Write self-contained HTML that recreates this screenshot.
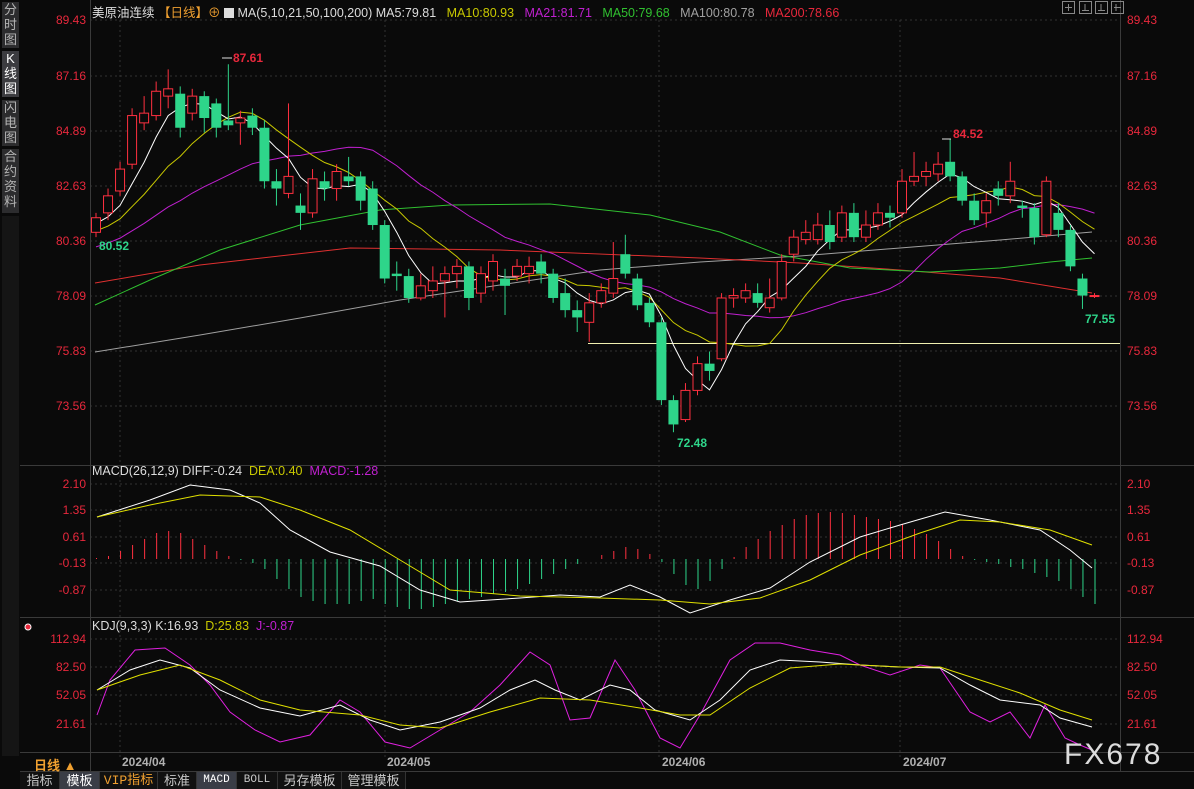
<!DOCTYPE html>
<html><head><meta charset="utf-8"><style>
body{margin:0;width:1194px;height:789px;background:#0a0a0a;overflow:hidden;font-family:"Liberation Sans","Noto Sans CJK SC",sans-serif;position:relative}
.sb{position:absolute;left:2px;width:17px;background:#2c2c2e;color:#b4b4b4;font-size:13px;line-height:15px;text-align:center}
.lab{position:absolute;font-size:12px;color:#e8283c}
.l{right:1108px;text-align:right}
.r{left:1127px}
.tab{position:absolute;top:772px;height:17px;font-size:13px;line-height:17px;color:#c8c8c8;text-align:center;background:#111;border-right:1px solid #333}
</style></head><body>
<div class="sb" style="top:2px;height:46px">分<br>时<br>图</div>
<div class="sb" style="top:51px;height:46px;background:#3c3c40;color:#fff">K<br>线<br>图</div>
<div class="sb" style="top:100px;height:46px">闪<br>电<br>图</div>
<div class="sb" style="top:149px;height:64px">合<br>约<br>资<br>料</div>
<div class="sb" style="top:216px;height:540px;background:#151515"></div>

<svg style="position:absolute;left:0;top:0" width="1194" height="789" id="s">
<g stroke="#333" stroke-dasharray="2,3" stroke-width="1">
<line x1="90" y1="20" x2="1120" y2="20"/><line x1="90" y1="76" x2="1120" y2="76"/><line x1="90" y1="131" x2="1120" y2="131"/><line x1="90" y1="186" x2="1120" y2="186"/><line x1="90" y1="241" x2="1120" y2="241"/><line x1="90" y1="296" x2="1120" y2="296"/><line x1="90" y1="351" x2="1120" y2="351"/><line x1="90" y1="406" x2="1120" y2="406"/>
<line x1="90" y1="484" x2="1120" y2="484"/><line x1="90" y1="510" x2="1120" y2="510"/><line x1="90" y1="537" x2="1120" y2="537"/><line x1="90" y1="563" x2="1120" y2="563"/><line x1="90" y1="590" x2="1120" y2="590"/>
<line x1="90" y1="639" x2="1120" y2="639"/><line x1="90" y1="667" x2="1120" y2="667"/><line x1="90" y1="695" x2="1120" y2="695"/><line x1="90" y1="724" x2="1120" y2="724"/>
<line x1="120" y1="20" x2="120" y2="760"/><line x1="385" y1="20" x2="385" y2="760"/><line x1="659" y1="20" x2="659" y2="760"/><line x1="900" y1="20" x2="900" y2="760"/>
</g>
<g stroke="#3a3a3a" stroke-width="1">
<line x1="90.5" y1="0" x2="90.5" y2="771"/><line x1="1120.5" y1="0" x2="1120.5" y2="771"/>
<line x1="20" y1="465.5" x2="1194" y2="465.5"/><line x1="20" y1="617.5" x2="1194" y2="617.5"/><line x1="20" y1="752.5" x2="1194" y2="752.5"/><line x1="20" y1="771.5" x2="1194" y2="771.5"/>
</g>
<line x1="588" y1="343.5" x2="1120" y2="343.5" stroke="#f0f0b0" stroke-width="1"/>
<g id="g" fill="none"></g>
<g fill="#bbb" stroke="#888" stroke-width="1">
<rect x="1062.5" y="1.5" width="12" height="12" fill="none"/><rect x="1079.5" y="1.5" width="12" height="12" fill="none"/><rect x="1095.5" y="1.5" width="12" height="12" fill="none"/><rect x="1111.5" y="1.5" width="12" height="12" fill="none"/>
<path d="M1068.5 4v7M1065 7.5h7M1085 4v7M1082 10.5h7M1101 4v7M1098 10.5h7M1114 7.5h7M1116 4v7" fill="none"/>
</g>
<g font-size="12" font-weight="bold"><text x="233" y="62" fill="#e8283c">87.61</text><text x="953" y="138" fill="#e8283c">84.52</text><text x="99" y="250" fill="#2ed58a">80.52</text><text x="677" y="447" fill="#2ed58a">72.48</text><text x="1085" y="323" fill="#2ed58a">77.55</text></g>
<g stroke="#ddd"><line x1="222" y1="58" x2="232" y2="58"/><line x1="942" y1="139" x2="951" y2="139"/></g>
<circle cx="28" cy="627" r="3" fill="#e8283c" stroke="#fff" stroke-width="1"/>
<text x="1064" y="764" font-size="30" fill="#dcdcdc" letter-spacing="2">FX678</text>
</svg>

<div style="position:absolute;left:92px;top:2px;font-size:12.5px;white-space:nowrap;color:#ddd">美原油连续 <span style="color:#f0a030">【日线】</span><span style="color:#f0a030">⊕</span> <span style="display:inline-block;width:10px;height:10px;background:#ddd;vertical-align:-1px"></span> MA(5,10,21,50,100,200) MA5:79.81 &nbsp;&nbsp;<span style="color:#c8c800">MA10:80.93</span> &nbsp;&nbsp;<span style="color:#c020d0">MA21:81.71</span> &nbsp;&nbsp;<span style="color:#30c030">MA50:79.68</span> &nbsp;&nbsp;<span style="color:#a0a0a0">MA100:80.78</span> &nbsp;&nbsp;<span style="color:#e8283c">MA200:78.66</span></div>
<div style="position:absolute;left:92px;top:464px;font-size:12.5px;white-space:nowrap;color:#ddd">MACD(26,12,9) DIFF:-0.24 &nbsp;<span style="color:#c8c800">DEA:0.40</span> &nbsp;<span style="color:#c020d0">MACD:-1.28</span></div>
<div style="position:absolute;left:92px;top:619px;font-size:12.5px;white-space:nowrap;color:#ddd">KDJ(9,3,3) K:16.93 &nbsp;<span style="color:#c8c800">D:25.83</span> &nbsp;<span style="color:#c020d0">J:-0.87</span></div>

<div class="lab l" style="top:13px">89.43</div><div class="lab l" style="top:69px">87.16</div><div class="lab l" style="top:124px">84.89</div><div class="lab l" style="top:179px">82.63</div><div class="lab l" style="top:234px">80.36</div><div class="lab l" style="top:289px">78.09</div><div class="lab l" style="top:344px">75.83</div><div class="lab l" style="top:399px">73.56</div>
<div class="lab r" style="top:13px">89.43</div><div class="lab r" style="top:69px">87.16</div><div class="lab r" style="top:124px">84.89</div><div class="lab r" style="top:179px">82.63</div><div class="lab r" style="top:234px">80.36</div><div class="lab r" style="top:289px">78.09</div><div class="lab r" style="top:344px">75.83</div><div class="lab r" style="top:399px">73.56</div>
<div class="lab l" style="top:477px">2.10</div><div class="lab l" style="top:503px">1.35</div><div class="lab l" style="top:530px">0.61</div><div class="lab l" style="top:556px">-0.13</div><div class="lab l" style="top:583px">-0.87</div>
<div class="lab r" style="top:477px">2.10</div><div class="lab r" style="top:503px">1.35</div><div class="lab r" style="top:530px">0.61</div><div class="lab r" style="top:556px">-0.13</div><div class="lab r" style="top:583px">-0.87</div>
<div class="lab l" style="top:632px">112.94</div><div class="lab l" style="top:660px">82.50</div><div class="lab l" style="top:688px">52.05</div><div class="lab l" style="top:717px">21.61</div>
<div class="lab r" style="top:632px">112.94</div><div class="lab r" style="top:660px">82.50</div><div class="lab r" style="top:688px">52.05</div><div class="lab r" style="top:717px">21.61</div>

<div style="position:absolute;left:34px;top:755px;font-size:13px;font-weight:bold;color:#f0a030">日线 ▲</div>
<div style="position:absolute;top:755px;left:122px;font-size:12px;font-weight:bold;color:#b0b0b0">2024/04</div>
<div style="position:absolute;top:755px;left:387px;font-size:12px;font-weight:bold;color:#b0b0b0">2024/05</div>
<div style="position:absolute;top:755px;left:662px;font-size:12px;font-weight:bold;color:#b0b0b0">2024/06</div>
<div style="position:absolute;top:755px;left:903px;font-size:12px;font-weight:bold;color:#b0b0b0">2024/07</div>

<div class="tab" style="left:20px;width:39px">指标</div>
<div class="tab" style="left:60px;width:39px;background:#3a3d46;color:#fff">模板</div>
<div class="tab" style="left:100px;width:57px;color:#f0a030;font-family:'Liberation Mono','Noto Sans CJK SC',monospace">VIP指标</div>
<div class="tab" style="left:158px;width:38px">标准</div>
<div class="tab" style="left:197px;width:39px;background:#3a3d46;color:#fff;font-size:11px;font-family:'Liberation Mono',monospace">MACD</div>
<div class="tab" style="left:237px;width:40px;font-size:11px;font-family:'Liberation Mono',monospace">BOLL</div>
<div class="tab" style="left:278px;width:63px">另存模板</div>
<div class="tab" style="left:342px;width:63px">管理模板</div>

<script>
var g=document.getElementById('g'),NS='http://www.w3.org/2000/svg';
function el(t,a){var e=document.createElementNS(NS,t);for(var k in a)e.setAttribute(k,a[k]);g.appendChild(e);return e}
function Y(p){return 20+(89.43-p)*24.32}
var C=[[80.7,81.3,81.5,80.5],[81.5,82.2,82.5,81.2],[82.4,83.3,83.6,82.2],[83.5,85.5,85.8,83.3],[85.2,85.6,86.3,84.9],[85.5,86.5,86.9,85.3],[86.3,86.6,87.4,85.8],[86.4,85.0,86.7,84.6],[85.6,86.3,86.6,85.3],[86.3,85.4,86.5,84.8],[86.0,85.0,86.2,84.6],[85.3,85.1,87.61,84.9],[85.2,85.4,85.7,84.3],[85.5,85.0,85.8,84.7],[85.0,82.8,85.3,82.5],[82.8,82.5,83.3,81.8],[82.3,83.0,86.0,82.1],[81.8,81.5,82.3,80.8],[81.5,82.9,83.3,81.3],[82.8,82.5,83.2,82.0],[82.5,83.2,83.5,82.0],[83.0,82.8,83.8,82.6],[83.0,82.0,83.2,81.6],[82.5,81.0,82.8,80.8],[81.0,78.8,81.2,78.6],[79.0,78.9,79.5,78.3],[78.9,78.0,79.2,77.8],[78.0,78.5,79.0,77.9],[78.3,78.7,79.3,78.0],[78.7,79.0,79.3,77.2],[79.0,79.3,79.6,78.4],[79.3,78.0,79.5,77.5],[78.2,79.0,79.3,77.8],[78.7,79.5,79.8,78.3],[78.8,78.5,79.2,77.3],[78.9,79.3,79.6,78.7],[79.0,79.3,79.7,78.6],[79.5,79.0,79.8,78.6],[79.0,78.0,79.2,77.8],[78.2,77.5,78.8,77.2],[77.5,77.2,77.9,76.6],[77.0,77.8,78.2,76.2],[77.8,78.3,78.6,77.6],[78.2,78.8,80.3,78.0],[79.8,79.0,80.6,78.8],[78.8,77.7,79.0,77.5],[77.8,77.0,78.0,76.8],[77.0,73.8,77.2,73.6],[73.8,72.8,74.0,72.48],[73.0,74.2,74.5,72.9],[74.2,75.3,75.6,74.0],[75.3,75.0,75.8,74.6],[75.5,78.0,78.2,75.4],[78.0,78.1,78.4,77.6],[78.0,78.3,78.6,77.8],[78.2,77.8,78.6,77.6],[77.6,78.0,78.8,77.4],[78.0,79.5,79.8,77.9],[79.8,80.5,80.8,79.5],[80.4,80.7,81.2,80.2],[80.4,81.0,81.5,80.2],[81.0,80.3,81.6,80.0],[80.5,81.5,81.8,80.3],[81.5,80.5,81.9,80.3],[80.5,81.0,81.6,80.3],[81.0,81.5,81.9,80.8],[81.5,81.3,81.8,80.9],[81.5,82.8,83.3,81.3],[82.8,83.0,84.0,82.6],[83.0,83.2,83.6,82.6],[83.1,83.5,84.0,82.8],[83.6,83.0,84.52,82.8],[83.0,82.0,83.2,81.8],[82.0,81.2,82.3,81.0],[81.5,82.0,82.3,80.9],[82.5,82.2,82.8,81.8],[82.2,82.8,83.6,81.9],[81.8,81.7,82.0,81.3],[81.7,80.5,81.9,80.2],[80.6,82.8,83.0,80.5],[81.5,80.8,81.9,80.5],[80.8,79.3,81.0,79.1],[78.8,78.1,79.0,77.55],[78.1,78.1,78.2,78.0]];
function X(i){return 96+i*12.03}
function line(pts,col){el('polyline',{points:pts.map(function(p){return p.join(',')}).join(' '),stroke:col,'stroke-width':1,fill:'none'})}
line([[95,352],[200,335],[300,318],[400,300],[500,285],[600,270],[700,262],[800,256],[900,248],[1000,240],[1092,232]],'#a0a0a0');
line([[95,283],[200,265],[350,248],[500,250],[700,258],[800,263],[900,270],[1000,278],[1092,293]],'#e03030');
line([[95,305],[150,280],[220,250],[300,225],[380,210],[450,205],[550,204],[650,215],[720,232],[780,255],[850,268],[930,272],[1000,268],[1050,262],[1092,258]],'#30c030');
function ma(n){var r=[];for(var i=0;i<C.length;i++){var s=0;for(var j=i-n+1;j<=i;j++){s+=C[Math.max(0,j)][1]+(j<0?(j*0.12):0)}r.push([X(i),Y(s/n)])}return r}
line(ma(21),'#c020d0');line(ma(10),'#c8c800');line(ma(5),'#ffffff');
C.forEach(function(c,i){var x=X(i),up=c[1]>=c[0],col=up?'#ff3040':'#2ed58a';var t=Y(Math.max(c[0],c[1])),b=Y(Math.min(c[0],c[1]));
el('line',{x1:x,y1:Y(c[2]),x2:x,y2:Y(c[3]),stroke:col});
if(up)el('rect',{x:x-4.5,y:t,width:9,height:Math.max(1,b-t),fill:'#0a0a0a',stroke:col});else el('rect',{x:x-5,y:t,width:10,height:Math.max(1,b-t),fill:col});});
var H=[1,3,8,14,20,26,28,26,20,14,8,3,-1,-4,-10,-20,-30,-38,-42,-45,-45,-45,-42,-40,-45,-48,-50,-50,-48,-45,-42,-40,-38,-35,-33,-30,-25,-20,-15,-10,-5,0,4,8,12,10,5,-3,-15,-26,-30,-22,-10,2,12,20,28,34,40,44,46,47,46,44,42,40,38,35,30,25,18,10,3,-1,-3,-5,-8,-10,-14,-18,-22,-30,-38,-45];
H.forEach(function(h,i){var x=X(i)+0.5;el('line',{x1:x,y1:559,x2:x,y2:559-h,stroke:h>=0?'#ff3040':'#2ed58a'})});
line([[97,517],[150,500],[190,485],[230,490],[260,503],[290,530],[330,552],[380,566],[420,590],[460,602],[520,598],[560,595],[600,597],[630,585],[660,597],[690,613],[730,600],[770,588],[810,562],[860,537],[900,525],[945,512],[990,520],[1040,530],[1070,550],[1092,568]],'#ffffff');
line([[97,517],[150,505],[200,495],[260,497],[300,510],[350,530],[400,560],[450,590],[520,596],[600,598],[660,600],[710,604],[760,598],[810,580],[860,555],[920,533],[960,520],[1000,522],[1050,530],[1092,545]],'#e0e000');
line([[97,715],[110,680],[135,650],[165,648],[190,665],[210,685],[230,712],[255,730],[280,742],[310,735],[340,700],[360,712],[385,742],[410,748],[440,730],[470,712],[500,685],[530,652],[550,665],[570,720],[590,718],[615,660],[635,690],[660,738],[680,748],[700,715],[730,660],[755,643],[780,643],[810,650],[840,655],[860,665],[890,675],[920,665],[940,668],[970,712],[990,722],[1010,712],[1030,738],[1045,705],[1065,738],[1080,745],[1092,750]],'#e020e0');
line([[97,690],[130,670],[160,660],[190,668],[220,690],[260,708],[300,716],[340,705],[370,720],[400,730],[440,722],[480,708],[510,690],[535,680],[555,690],[580,700],[610,685],[630,690],[655,710],[690,720],[720,700],[750,670],[780,660],[820,662],[860,665],[900,667],[940,668],[970,685],[1000,700],[1040,705],[1060,718],[1092,727]],'#ffffff');
line([[97,690],[140,675],[180,665],[220,680],[260,700],[300,710],[360,715],[400,725],[440,728],[490,712],[540,698],[590,700],[640,708],[680,715],[710,715],[750,688],[790,668],[840,664],[900,667],[940,667],[980,680],[1020,693],[1060,710],[1092,720]],'#e0e000');
</script>
</body></html>
